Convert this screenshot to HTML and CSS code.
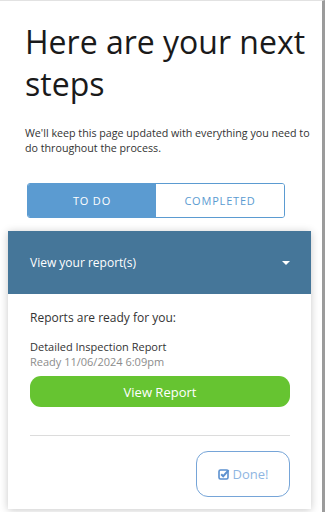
FILE: index.html
```html
<!DOCTYPE html>
<html lang="en">
<head>
    <meta charset="UTF-8">
    <meta name="viewport" content="width=device-width, initial-scale=1.0">
    <title>Next steps</title>
    <link rel="stylesheet" href="styles.css">
</head>
<body>
    <div class="page">
        <div class="intro">
            <h1>Here are your next steps</h1>
            <p>We'll keep this page updated with everything you need to do throughout the process.</p>
        </div>

        <div class="tabs">
            <button class="tab active">TO DO</button>
            <button class="tab">COMPLETED</button>
        </div>

        <!-- Report step card -->
        <div class="card">
            <div class="card-header">
                <span>View your report(s)</span>
                <span class="caret"></span>
            </div>
            <div class="card-body">
                <p class="lead">Reports are ready for you:</p>
                <div class="report">
                    <div class="report-name">Detailed Inspection Report</div>
                    <div class="report-date">Ready 11/06/2024 6:09pm</div>
                </div>
                <button class="view-btn">View Report</button>
                <hr>
                <div class="actions">
                    <button class="done-btn">
                        <svg width="12" height="12" viewBox="0 0 12 12">
                            <rect x="1" y="2" width="9" height="9" rx="1.5" fill="none" stroke="#5b90cf" stroke-width="1.6"/>
                            <path d="M3.2 6.2 L5.2 8.2 L10.6 2.2" fill="none" stroke="#5b90cf" stroke-width="2"/>
                        </svg>
                        Done!
                    </button>
                </div>
            </div>
        </div>
    </div>
</body>
</html>
```

FILE: styles.css
```css
body {
    margin: 0;
    font-family: 'Open Sans', sans-serif;
    background-color: #fff;
    color: #222;
}

.page {
    width: 325px;
    min-height: 512px;
    box-sizing: border-box;
    border-top: 1px solid #e2e2e2;
    border-right: 3px solid #9b9b9b;
    overflow: hidden;
}

.intro {
    padding: 0 8px 0 25px;
}

.intro h1 {
    margin: 20px 0 0;
    font-size: 32px;
    font-weight: 400;
    line-height: 42px;
    color: #1a1a1a;
}

.intro p {
    margin: 21px 0 0;
    font-size: 10.7px;
    line-height: 15px;
    color: #333;
}

.tabs {
    display: flex;
    width: 258px;
    height: 35px;
    margin: 27px 0 0 27px;
    box-sizing: border-box;
    border: 1px solid #5b9bd1;
    border-radius: 3px;
    overflow: hidden;
}

.tab {
    flex: 1;
    border: none;
    background-color: #fff;
    color: #5b9bd1;
    font-family: inherit;
    font-size: 11px;
    letter-spacing: 0.8px;
    padding: 0;
}

.tab.active {
    background-color: #5b9bd1;
    color: #fff;
}

.card {
    width: 303px;
    margin: 13px 0 0 8px;
    background-color: #fff;
    box-shadow: 0 1px 8px rgba(0, 0, 0, 0.22);
}

.card-header {
    height: 63px;
    background-color: #457699;
    color: #fff;
    font-size: 12px;
    display: flex;
    align-items: center;
    justify-content: space-between;
    padding: 0 21px 0 22px;
}

.caret {
    width: 0;
    height: 0;
    border-left: 4px solid transparent;
    border-right: 4px solid transparent;
    border-top: 4px solid #fff;
}

.card-body {
    padding: 16px 21px 12px 22px;
}

.lead {
    margin: 0;
    font-size: 12px;
    line-height: 16px;
    color: #333;
}

.report {
    margin-top: 13px;
    font-size: 11px;
    line-height: 15px;
}

.report-name {
    color: #333;
}

.report-date {
    color: #8c8c8c;
}

.view-btn {
    display: block;
    width: 100%;
    height: 31px;
    margin-top: 7px;
    border: none;
    border-radius: 11px;
    background-color: #66c431;
    color: #fff;
    font-family: inherit;
    font-size: 13px;
}

hr {
    margin: 28px 0 0;
    border: none;
    border-top: 1px solid #dcdcdc;
}

.actions {
    display: flex;
    justify-content: flex-end;
    margin-top: 15px;
}

.done-btn {
    width: 94px;
    height: 46px;
    border: 1px solid #76a5d8;
    border-radius: 12px;
    background-color: #fff;
    color: #8fb6e2;
    font-family: inherit;
    font-size: 13px;
    display: flex;
    align-items: center;
    justify-content: center;
    gap: 3px;
    padding: 0;
}
```
